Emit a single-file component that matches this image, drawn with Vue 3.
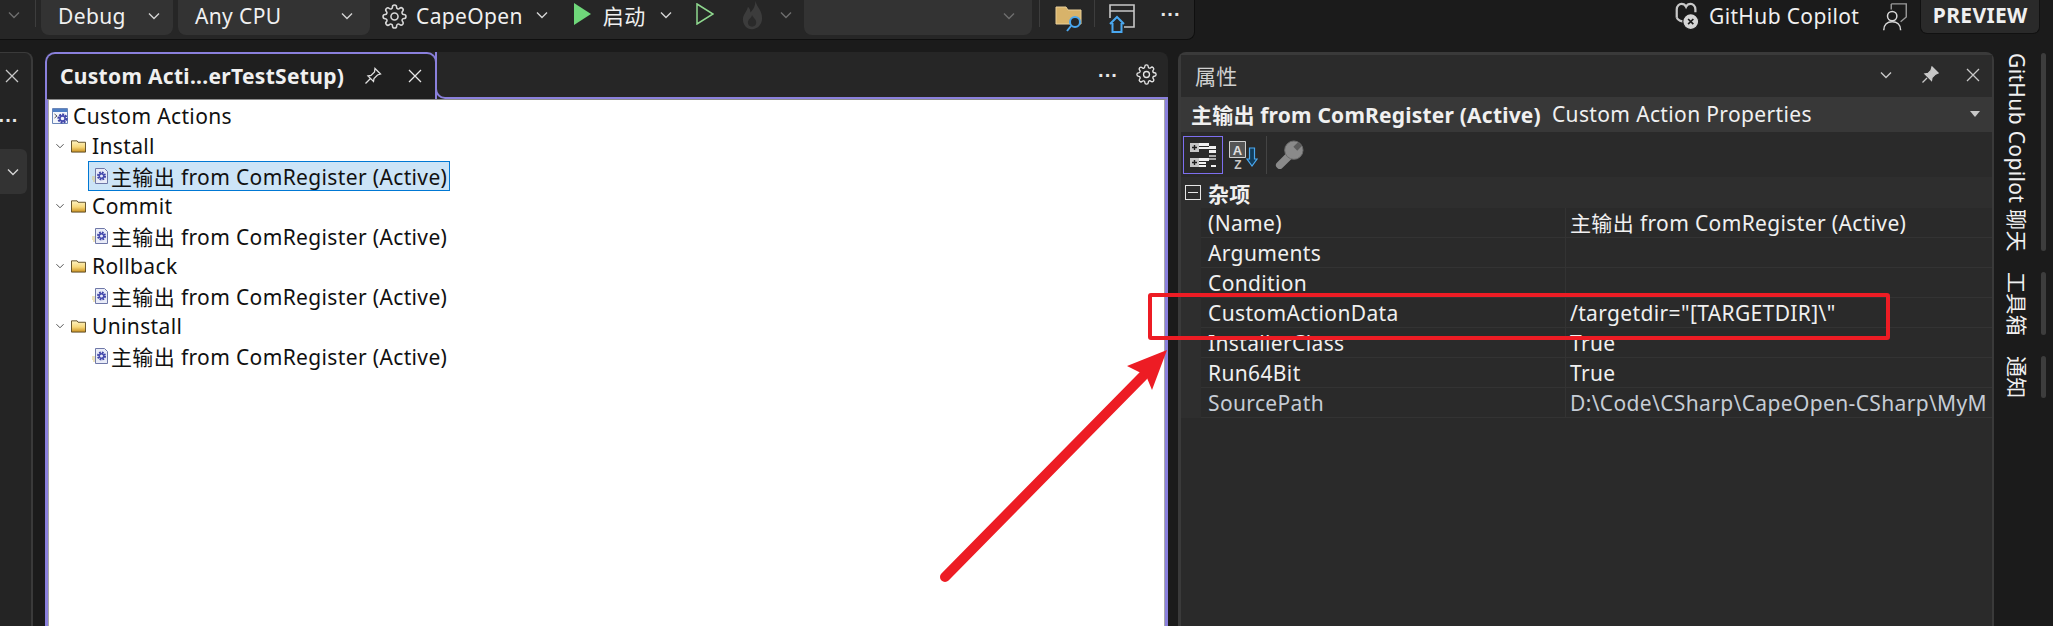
<script setup>
const groups = ["Install", "Commit", "Rollback", "Uninstall"];

const props = [
  { name: "(Name)", value: "主输出 from ComRegister (Active)" },
  { name: "Arguments", value: "" },
  { name: "Condition", value: "" },
  { name: "CustomActionData", value: '/targetdir="[TARGETDIR]\\"' },
  { name: "InstallerClass", value: "True" },
  { name: "Run64Bit", value: "True" },
  { name: "SourcePath", value: "D:\\Code\\CSharp\\CapeOpen-CSharp\\MyM", muted: true },
];
</script>

<template>
  <div class="app">
    <svg class="defs" width="0" height="0" aria-hidden="true">
      <defs>
        <linearGradient id="folderFill" x1="0" y1="0" x2="0" y2="1">
          <stop offset="0" stop-color="#fdf3c4" />
          <stop offset="0.55" stop-color="#f6d77a" />
          <stop offset="1" stop-color="#c98f1f" />
        </linearGradient>
      </defs>
      <symbol id="chev" viewBox="0 0 14 14"><path d="M2 4.500 7 9.500 12 4.500" fill="none" stroke="currentColor" stroke-width="1.400" /></symbol>
      <symbol id="cross" viewBox="0 0 14 14"><path d="M1 1 13 13M13 1 1 13" fill="none" stroke="currentColor" stroke-width="1.300" /></symbol>
      <symbol id="gear" viewBox="0 0 24 24">
        <circle cx="12" cy="12" r="3.400" fill="none" stroke="currentColor" stroke-width="1.500" />
        <path fill="none" stroke="currentColor" stroke-width="1.500" d="M19.400 15a1.650 1.650 0 0 0 .33 1.820l.06.06a2 2 0 0 1 0 2.830 2 2 0 0 1-2.830 0l-.06-.06a1.650 1.650 0 0 0-1.820-.33 1.650 1.650 0 0 0-1 1.510V21a2 2 0 0 1-4 0v-.09A1.650 1.650 0 0 0 9 19.400a1.650 1.650 0 0 0-1.820.33l-.06.06a2 2 0 0 1-2.830-2.830l.06-.06a1.650 1.650 0 0 0 .33-1.820 1.650 1.650 0 0 0-1.510-1H3a2 2 0 0 1 0-4h.09A1.650 1.650 0 0 0 4.600 9a1.650 1.650 0 0 0-.33-1.820l-.06-.06a2 2 0 0 1 2.830-2.830l.06.06a1.650 1.650 0 0 0 1.820.33H9a1.650 1.650 0 0 0 1-1.510V3a2 2 0 0 1 4 0v.09a1.650 1.650 0 0 0 1 1.510 1.650 1.650 0 0 0 1.820-.33l.06-.06a2 2 0 0 1 2.830 2.830l-.06.06a1.650 1.650 0 0 0-.33 1.820V9a1.650 1.650 0 0 0 1.510 1H21a2 2 0 0 1 0 4h-.09a1.650 1.650 0 0 0-1.510 1z" />
      </symbol>
      <symbol id="folder" viewBox="0 0 16 14">
        <path d="M.5 1.500h6l1 1.500h8v10.500H.5z" fill="url(#folderFill)" stroke="#5c4a22" />
      </symbol>
      <symbol id="outfile" viewBox="0 0 16 16">
        <path d="M3.500.5h9l3 3v12h-12z" fill="#e9ecf8" stroke="#6f78a8" />
        <circle cx="9.500" cy="8" r="3.200" fill="none" stroke="#3f44a6" stroke-width="2.600" stroke-dasharray="1.600 .9" />
        <circle cx="9.500" cy="8" r="2.200" fill="none" stroke="#4a4fb0" stroke-width="1.400" />
        <path d="M0 9h3M0 11h3M1 13h2" stroke="#d9c77a" />
      </symbol>
      <symbol id="pin" viewBox="0 0 18 18">
        <path d="M11 1.500 16.500 7l-3 1-3.500 3.500-.5 3L4 9l3-.5L10.500 5zM6.500 11.500 1.500 16.500" fill="none" stroke="currentColor" stroke-width="1.300" />
      </symbol>
    </svg>

    <header class="topbar">
      <div class="toolbar">
        <svg class="chev dim first"><use href="#chev" /></svg>
        <span class="sep first-sep"></span>
        <div class="combo debug"><span>Debug</span><svg class="chev"><use href="#chev" /></svg></div>
        <div class="combo cpu"><span>Any CPU</span><svg class="chev"><use href="#chev" /></svg></div>
        <svg class="gear-big"><use href="#gear" /></svg>
        <span class="tool-text project">CapeOpen</span>
        <svg class="chev"><use href="#chev" /></svg>
        <svg class="play" viewBox="0 0 17 22"><path d="M0 0 17 11 0 22z" fill="#6fd77a" /></svg>
        <span class="tool-text start">启动</span>
        <svg class="chev"><use href="#chev" /></svg>
        <svg class="play-outline" viewBox="0 0 18 22"><path d="M1 1 17 11 1 21z" fill="none" stroke="#8fd88f" stroke-width="1.500" /></svg>
        <svg class="flame" viewBox="0 0 25 36">
          <path d="M16 1C17 8 24 12 24 22 24 30 18 35 12 35 5 35 1 29 1 23 1 17 6 14 7 8 9 10 10 12 10 15 13 12 16 8 16 1z" fill="#3c3c3c" />
          <path d="M12 18c1 3 5 5 5 9 0 3-2 5-5 5-3 0-5-2-5-5 0-4 4-5 5-9z" fill="#2a2a2a" />
        </svg>
        <svg class="chev dim"><use href="#chev" /></svg>
        <div class="combo empty"><svg class="chev dim"><use href="#chev" /></svg></div>
        <span class="sep"></span>
        <svg class="folder-search" viewBox="0 0 28 28">
          <path d="M1 3h10l2 3h13v14H1z" fill="#d8b36a" stroke="#e9cf98" />
          <circle cx="20" cy="18" r="5" fill="#262626" stroke="#4aa8f0" stroke-width="2" />
          <path d="M16 22 12 27" stroke="#4aa8f0" stroke-width="2" />
        </svg>
        <span class="sep"></span>
        <svg class="home-window" viewBox="0 0 26 30">
          <path d="M1 14V1h24v22H15M1 7h24" fill="none" stroke="#c8c8c8" stroke-width="1.600" />
          <path d="M1 20 8 13 15 20M3.500 19v9h9v-9" fill="none" stroke="#4aa8f0" stroke-width="2" />
        </svg>
        <span class="dots">···</span>
      </div>
      <div class="top-right">
        <svg class="copilot" viewBox="0 0 28 30">
          <path d="M3 17V8c0-4 3-6 5-6s4 1 5 3c1-2 3-3 5-3s5 2 5 6v3M3 17c2 3 5 4 9 4" fill="none" stroke="#c8c8c8" stroke-width="2.400" />
          <circle cx="18" cy="21" r="8.500" fill="#d6d6d6" stroke="#1b1b1b" stroke-width="1.200" />
          <path d="M15.200 18.200 20.800 23.800M20.800 18.200 15.200 23.800" stroke="#1b1b1b" stroke-width="1.800" />
        </svg>
        <span class="tool-text copilot-text">GitHub Copilot</span>
        <svg class="person" viewBox="0 0 26 32">
          <path d="M9 2h16v14l-6 5M9 2v6" fill="none" stroke="#9a9a9a" stroke-width="1.500" />
          <circle cx="10" cy="15" r="5" fill="#1b1b1b" stroke="#d8d8d8" stroke-width="1.600" />
          <path d="M1 30c0-6 4-9 9-9s9 3 9 9" fill="none" stroke="#d8d8d8" stroke-width="1.600" />
        </svg>
        <div class="preview">PREVIEW</div>
      </div>
    </header>

    <main class="workspace">
      <aside class="left-panel">
        <svg class="lp-x"><use href="#cross" /></svg>
        <span class="lp-dots">···</span>
        <div class="lp-btn"><svg class="chev"><use href="#chev" /></svg></div>
      </aside>

      <section class="doc">
        <div class="doc-head">
          <div class="tab">
            <span class="tab-title">Custom Acti...erTestSetup)</span>
            <svg class="pin"><use href="#pin" /></svg>
            <svg class="tab-x"><use href="#cross" /></svg>
          </div>
          <div class="doc-actions">
            <span class="dots">···</span>
            <svg class="gear-small"><use href="#gear" /></svg>
          </div>
        </div>
        <div class="tree">
          <div class="node root">
            <svg class="root-icon" viewBox="0 0 16 16">
              <path d="M.5.5h15v15H.5z" fill="#f3f6fb" stroke="#6b86b8" />
              <path d="M1 1h14v3H1z" fill="#4f7fc4" />
              <path d="M2.500 6 5 8 2.500 10" fill="none" stroke="#555" />
              <circle cx="10.500" cy="10.500" r="3.600" fill="none" stroke="#3f44a6" stroke-width="3" stroke-dasharray="1.800 .9" />
              <circle cx="10.500" cy="10.500" r="2.600" fill="none" stroke="#4a4fb0" stroke-width="1.600" />
            </svg>
            <span>Custom Actions</span>
          </div>
          <template v-for="(g, i) in groups" :key="g">
            <div class="node group">
              <svg class="twist"><use href="#chev" /></svg>
              <svg class="folder"><use href="#folder" /></svg>
              <span>{{ g }}</span>
            </div>
            <div class="node leaf">
              <div class="leaf-inner" :class="{ selected: i === 0 }">
                <svg class="outfile"><use href="#outfile" /></svg>
                <span>主输出 from ComRegister (Active)</span>
              </div>
            </div>
          </template>
        </div>
      </section>

      <section class="props">
        <div class="props-title">
          <span>属性</span>
          <svg class="chev"><use href="#chev" /></svg>
          <svg class="pin-solid" viewBox="0 0 18 18"><path d="M11 1 17 7l-3 1.500-3 3-.5 3L4 8l3-.5 3-3zM6 12 1.500 16.500" fill="#c8c8c8" stroke="#c8c8c8" stroke-width="1.300" /></svg>
          <svg class="props-x"><use href="#cross" /></svg>
        </div>
        <div class="props-object">
          <b>主输出 from ComRegister (Active)</b>
          <span>Custom Action Properties</span>
          <i class="caret"></i>
        </div>
        <div class="props-tools">
          <div class="tool-btn">
            <svg viewBox="0 0 26 26" width="26" height="26">
              <path d="M0 1h9v9H0zM0 16h9v9H0z" fill="#c6c6c6" />
              <path d="M2 5.500h5M4.500 3v5M2 20.500h5M4.500 18v5" stroke="#1e1e1e" stroke-width="1.400" />
              <path d="M9 1h10v3H9zM9 5h10v2H9zM19 4h7v3h-7zM19 8h7v3h-7zM9 16h10v3H9zM9 20h7v2H9zM9 23h7v2H9zM21 23h5v2h-5z" fill="#f0f0f0" />
              <path d="M19 13h7v2h-7zM19 16h7v2h-7z" fill="#a8a8a8" />
            </svg>
          </div>
          <svg class="az" viewBox="0 0 29 28">
            <path d="M.5.5h16v16H.5z" fill="#555" stroke="#d0d0d0" />
            <text x="8.500" y="13.500" text-anchor="middle" class="az-letter">A</text>
            <text x="9" y="27.500" text-anchor="middle" class="az-letter small">Z</text>
            <path d="M20.500 7h5v11h2.500l-5 7-5-7h2.500z" fill="#123d5c" stroke="#4aa8f0" stroke-width="1.200" />
          </svg>
          <span class="tool-sep"></span>
          <svg class="key" viewBox="0 0 30 30">
            <path d="M5 26 14 17" stroke="#8a8a8a" stroke-width="8" stroke-linecap="round" />
            <circle cx="19.500" cy="10.500" r="9.500" fill="#8a8a8a" stroke="#6a6a6a" />
            <path d="M19 7l5-5 4 4-5 5z" fill="#5c5c5c" />
          </svg>
        </div>
        <div class="grid">
          <div class="cat">
            <span class="minus"></span>
            <b>杂项</b>
          </div>
          <div v-for="p in props" :key="p.name" class="row" :class="{ muted: p.muted }">
            <span class="cell name">{{ p.name }}</span>
            <span class="cell value">{{ p.value }}</span>
          </div>
        </div>
      </section>

      <aside class="rail">
        <div class="rail-item copilot-chat"><span>GitHub Copilot 聊天</span><i></i></div>
        <div class="rail-item toolbox"><span>工具箱</span><i></i></div>
        <div class="rail-item notice"><span>通知</span><i></i></div>
      </aside>
    </main>

    <svg class="annotation" width="2053" height="626" viewBox="0 0 2053 626">
      <rect x="1150" y="295" width="738" height="43" rx="1" fill="none" stroke="#ed1c24" stroke-width="4" />
      <path d="M945 577 1143 376" stroke="#ed1c24" stroke-width="10" stroke-linecap="round" />
      <path d="M1167 350 1127 366 1139 372 1147 378 1152 390z" fill="#ed1c24" />
    </svg>
  </div>
</template>

<style scoped>
.app {
  position: relative;
  width: 2053px;
  height: 626px;
  overflow: hidden;
  background: #1b1b1b;
  color: #f0f0f0;
  font-family: "Noto Sans", "Noto Sans CJK SC", sans-serif;
  font-size: 21px;
  letter-spacing: 0.36px;
}
b {
  letter-spacing: 0.2px;
}
.defs {
  position: absolute;
}
svg {
  display: block;
  flex: none;
}
.topbar {
  display: flex;
  height: 40px;
}
.toolbar {
  display: flex;
  align-items: flex-start;
  width: 1195px;
  height: 40px;
  padding-top: 8px;
  box-sizing: border-box;
  background: #262626;
  border-bottom: 1px solid #0f0f0f;
  border-right: 1px solid #0f0f0f;
  border-bottom-right-radius: 8px;
}
.chev {
  width: 14px;
  height: 14px;
  color: #d4d4d4;
}
.chev.dim {
  color: #6e6e6e;
}
.first {
  margin-left: 7px;
}
.sep {
  width: 1px;
  height: 27px;
  margin-top: -8px;
  background: #3d3d3d;
}
.first-sep {
  margin-left: 14px;
}
.combo {
  display: flex;
  align-items: center;
  justify-content: space-between;
  height: 35px;
  margin-top: -8px;
  box-sizing: border-box;
  background: #333;
  border-radius: 0 0 8px 8px;
  padding-bottom: 3px;
}
.debug {
  width: 132px;
  margin-left: 5px;
  padding-left: 17px;
  padding-right: 12px;
}
.cpu {
  width: 192px;
  margin-left: 5px;
  padding-left: 17px;
  padding-right: 16px;
}
.gear-big {
  width: 25px;
  height: 25px;
  margin-left: 12px;
  margin-top: -4px;
  color: #d8d8d8;
}
.tool-text {
  line-height: 20px;
  margin-top: -2px;
}
.project {
  margin-left: 9px;
  margin-right: 12px;
}
.play {
  width: 17px;
  height: 22px;
  margin-left: 25px;
  margin-top: -5px;
}
.start {
  margin-left: 12px;
  margin-right: 13px;
}
.play-outline {
  width: 18px;
  height: 22px;
  margin-left: 23px;
  margin-top: -5px;
}
.flame {
  width: 25px;
  height: 30px;
  margin-left: 26px;
  margin-top: -8px;
}
.flame + .chev {
  margin-left: 14px;
}
.empty {
  width: 228px;
  margin-left: 11px;
  margin-right: 7px;
  padding-left: 198px;
}
.folder-search {
  width: 28px;
  height: 28px;
  margin-left: 15px;
  margin-right: 11px;
  margin-top: -4px;
}
.home-window {
  width: 26px;
  height: 30px;
  margin-left: 14px;
  margin-top: -4px;
}
.dots {
  font-family: "Liberation Sans", sans-serif;
  font-weight: 700;
  font-size: 20px;
  line-height: 20px;
  letter-spacing: 0;
  color: #e6e6e6;
}
.toolbar .dots {
  margin-left: 26px;
  margin-top: -4px;
}
.top-right {
  display: flex;
  align-items: flex-start;
  flex: 1;
  padding-top: 2px;
  padding-left: 478px;
}
.copilot {
  width: 28px;
  height: 28px;
}
.copilot-text {
  margin-left: 8px;
  margin-top: 4px;
}
.person {
  width: 26px;
  height: 30px;
  margin-left: 23px;
}
.preview {
  width: 120px;
  height: 34px;
  margin-left: 12px;
  margin-top: -2px;
  background: #2a2a2a;
  border: 1px solid #111;
  border-top: 0;
  border-radius: 0 0 7px 7px;
  text-align: center;
  font-weight: 700;
  line-height: 31px;
  box-sizing: border-box;
}
.workspace {
  display: flex;
  height: 574px;
  margin-top: 12px;
}
.left-panel {
  width: 33px;
  padding-top: 16px;
  box-sizing: border-box;
  background: #242424;
  border-top: 1px solid #3a3a3a;
  border-right: 2px solid #3a3a3a;
  border-top-right-radius: 8px;
  display: flex;
  flex-direction: column;
  align-items: center;
}
.lp-x {
  width: 14px;
  height: 14px;
  color: #c8c8c8;
  margin-left: -8px;
}
.lp-dots {
  font-family: "Liberation Sans", sans-serif;
  font-size: 20px;
  font-weight: 700;
  line-height: 20px;
  letter-spacing: 0;
  margin-top: 27px;
  margin-left: -14px;
  color: #e6e6e6;
}
.lp-btn {
  width: 29px;
  height: 45px;
  margin-top: 19px;
  margin-left: -6px;
  background: #333;
  border-radius: 0 6px 6px 0;
  display: flex;
  align-items: center;
  justify-content: center;
}
.doc {
  display: flex;
  flex-direction: column;
  width: 1123px;
  margin-left: 12px;
}
.doc-head {
  display: flex;
  height: 47px;
  background: #262626;
  border-radius: 8px 8px 0 0;
}
.tab {
  display: flex;
  align-items: center;
  width: 392px;
  box-sizing: border-box;
  padding-bottom: 2px;
  background: #1f1f1f;
  border: 2px solid #8a80dc;
  border-bottom: 0;
  border-radius: 10px 10px 0 0;
}
.tab-title {
  font-weight: 700;
  letter-spacing: 0.3px;
  margin-left: 13px;
  white-space: nowrap;
}
.pin {
  width: 18px;
  height: 18px;
  margin-left: 20px;
  color: #e0e0e0;
}
.tab-x {
  width: 14px;
  height: 14px;
  margin-left: 26px;
  color: #e6e6e6;
}
.doc-actions {
  flex: 1;
  display: flex;
  align-items: center;
  justify-content: flex-end;
  gap: 18px;
  margin-left: -2px;
  padding-right: 11px;
  border-left: 2px solid #8a80dc;
  border-bottom: 2px solid #8a80dc;
  border-bottom-left-radius: 10px;
}
.gear-small {
  width: 21px;
  height: 21px;
  color: #e6e6e6;
}
.tree {
  flex: 1;
  padding-top: 1px;
  background: #fff;
  color: #111;
  border-top: 1px solid #8c8c8c;
  border-left: 3px solid #8a80dc;
  border-right: 3px solid #8a80dc;
  box-shadow: inset 1px 0 #a8a8a8, inset -1px 0 #a8a8a8;
}
.node {
  display: flex;
  align-items: center;
  height: 30px;
  white-space: nowrap;
}
.root {
  padding-left: 4px;
}
.root-icon {
  width: 16px;
  height: 16px;
  margin-right: 5px;
}
.group {
  padding-left: 7px;
}
.twist {
  width: 10px;
  height: 10px;
  color: #555;
  margin-right: 6px;
}
.folder {
  width: 15px;
  height: 14px;
  margin-right: 6px;
}
.leaf {
  padding-left: 40px;
}
.leaf-inner {
  display: flex;
  align-items: center;
  height: 30px;
  padding: 0 2px 0 3px;
  border: 1px solid transparent;
  box-sizing: border-box;
}
.leaf-inner.selected {
  background: #cce4f7;
  border-color: #0078d4;
}
.outfile {
  width: 16px;
  height: 16px;
  margin-right: 3px;
}
.props {
  display: flex;
  flex-direction: column;
  width: 816px;
  margin-left: 10px;
  box-sizing: border-box;
  background: #292929;
  border: 3px solid #3a3a3a;
  border-bottom: 0;
  border-right-width: 2px;
  border-radius: 8px 8px 0 0;
}
.props-title {
  display: flex;
  align-items: center;
  height: 42px;
  padding-left: 14px;
  padding-bottom: 2px;
  box-sizing: border-box;
  color: #d0d0d0;
  background: #2b2b2b;
}
.props-title span {
  flex: 1;
}
.props-title .chev {
  color: #c8c8c8;
}
.pin-solid {
  width: 18px;
  height: 18px;
  margin-left: 28px;
}
.props-x {
  width: 14px;
  height: 14px;
  margin-left: 27px;
  margin-right: 12px;
  color: #c8c8c8;
}
.props-object {
  display: flex;
  align-items: center;
  height: 35px;
  padding-left: 10px;
  padding-bottom: 2px;
  box-sizing: border-box;
  background: #383838;
  white-space: nowrap;
}
.props-object span {
  margin-left: 11px;
  flex: 1;
}
.caret {
  width: 0;
  height: 0;
  border: 5px solid transparent;
  border-top: 6px solid #c8c8c8;
  border-bottom: 0;
  margin-right: 12px;
}
.props-tools {
  display: flex;
  align-items: center;
  height: 45px;
  padding-left: 2px;
  background: #2a2a2a;
}
.tool-btn {
  display: flex;
  align-items: center;
  justify-content: center;
  width: 40px;
  height: 38px;
  box-sizing: border-box;
  border: 1px solid #7d6ff0;
}
.az {
  width: 29px;
  height: 28px;
  margin-left: 6px;
}
.az-letter {
  font-family: "Liberation Sans", sans-serif;
  font-weight: 700;
  font-size: 13px;
  letter-spacing: 0;
  fill: #e0e0e0;
}
.az-letter.small {
  font-size: 12px;
  fill: #c8c8c8;
}
.tool-sep {
  width: 1px;
  height: 38px;
  margin-left: 8px;
  background: #444;
}
.key {
  width: 29px;
  height: 29px;
  margin-left: 8px;
}
.grid {
  flex: 1;
  background: #2a2a2a;
  overflow: hidden;
}
.cat {
  display: flex;
  align-items: center;
  height: 31px;
  padding-left: 4px;
  background: #2e2e2e;
}
.minus {
  position: relative;
  width: 16px;
  height: 15px;
  box-sizing: border-box;
  border: 1px solid #e6e6e6;
  margin-right: 7px;
}
.minus::after {
  content: "";
  position: absolute;
  left: 2px;
  right: 2px;
  top: 6px;
  height: 1px;
  background: #e6e6e6;
}
.row {
  display: flex;
  height: 30px;
  padding-left: 20px;
  background: #2e2e2e;
  white-space: nowrap;
}
.cell {
  display: block;
  height: 30px;
  line-height: 30px;
  box-sizing: border-box;
  background: #2a2a2a;
  border-bottom: 1px solid #333;
}
.name {
  width: 365px;
  flex: none;
  padding-left: 7px;
  border-right: 1px solid #333;
}
.value {
  flex: 1;
  padding-left: 4px;
  overflow: hidden;
}
.muted .cell {
  color: #c6cdd6;
}
.rail {
  flex: 1;
  display: flex;
  flex-direction: column;
  align-items: stretch;
  padding-top: 1px;
  gap: 21px;
}
.rail-item {
  display: flex;
  justify-content: flex-end;
  padding-right: 7px;
}
.rail-item span {
  writing-mode: vertical-rl;
  text-orientation: sideways;
  white-space: nowrap;
  margin-right: 13px;
  line-height: 22px;
}
.rail-item i {
  width: 5px;
  border-radius: 3px;
  background: #3d3d3d;
}
.copilot-chat {
  height: 198px;
}
.toolbox {
  height: 63px;
}
.notice {
  height: 42px;
}
.annotation {
  position: absolute;
  left: 0;
  top: 0;
  pointer-events: none;
}
</style>

<style>
html,
body {
  margin: 0;
  background: #1b1b1b;
}
</style>
